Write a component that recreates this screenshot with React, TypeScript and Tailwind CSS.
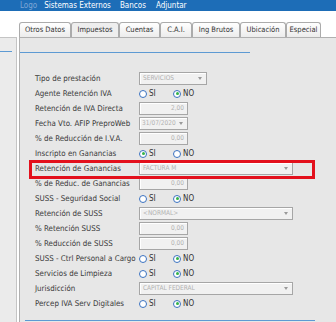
import React from "react";

type Row = {
  label: string;
  kind: "select" | "input" | "radio" | "date" | "long";
  value?: string;
  on?: "SI" | "NO";
};

const rows: Row[] = [
  { label: "Tipo de prestación", kind: "select", value: "SERVICIOS" },
  { label: "Agente Retención IVA", kind: "radio", on: "NO" },
  { label: "Retención de IVA Directa", kind: "input", value: "2,00" },
  { label: "Fecha Vto. AFIP PreproWeb", kind: "date", value: "31/07/2020" },
  { label: "% de Reducción de I.V.A.", kind: "input", value: "0,00" },
  { label: "Inscripto en Ganancias", kind: "radio", on: "SI" },
  { label: "Retención de Ganancias", kind: "long", value: "FACTURA M" },
  { label: "% de Reduc. de Ganancias", kind: "input", value: "0,00" },
  { label: "SUSS - Seguridad Social", kind: "radio", on: "NO" },
  { label: "Retención de SUSS", kind: "long", value: "<NORMAL>" },
  { label: "% Retención SUSS", kind: "input", value: "0,00" },
  { label: "% Reducción de SUSS", kind: "input", value: "0,00" },
  { label: "SUSS - Ctrl Personal a Cargo", kind: "radio", on: "NO" },
  { label: "Servicios de Limpieza", kind: "radio", on: "NO" },
  { label: "Jurisdicción", kind: "long", value: "CAPITAL FEDERAL" },
  { label: "Percep IVA Serv Digitales", kind: "radio", on: "NO" },
];

const tabs = [
  { name: "Otros Datos", w: "w-[52px]" },
  { name: "Impuestos", w: "w-[48px]", active: true },
  { name: "Cuentas", w: "w-[41px]" },
  { name: "C.A.I.", w: "w-[32px]" },
  { name: "Ing Brutos", w: "w-[48px]" },
  { name: "Ubicación", w: "w-[46px]" },
  { name: "Especial", w: "w-[35px]" },
];

const Arrow = () => (
  <span className="ml-auto mr-[4px] h-0 w-0 border-x-[2.5px] border-t-[3px] border-x-transparent border-t-[#9a9a9a]" />
);

const Radio = ({ label, checked }: { label: string; checked: boolean }) => (
  <div className="flex items-center gap-[2px]">
    <span className="flex h-[8px] w-[8px] items-center justify-center rounded-full border border-[#3b72c0] bg-white">
      {checked && <span className="h-[3px] w-[3px] rounded-full bg-[#35b34a]" />}
    </span>
    <span className="text-[8px] text-[#333]">{label}</span>
  </div>
);

const Control = ({ row }: { row: Row }) => {
  const box =
    "flex h-[13px] items-center border border-[#a6a6a6] bg-[#f1f1f1] text-[6.5px] text-[#b2b2b2] shadow-[inset_1px_1px_0_#fff]";
  if (row.kind === "radio") {
    return (
      <div className="flex items-center">
        <div className="w-[34px]">
          <Radio label="SI" checked={row.on === "SI"} />
        </div>
        <Radio label="NO" checked={row.on === "NO"} />
      </div>
    );
  }
  if (row.kind === "input") {
    return <div className={`${box} w-[49px] justify-end pr-[3px]`}>{row.value}</div>;
  }
  if (row.kind === "date") {
    return (
      <div className={`${box} w-[49px] pl-[2px]`}>
        <span>{row.value}</span>
        <Arrow />
      </div>
    );
  }
  if (row.kind === "select") {
    return (
      <div className={`${box} w-[68px] pl-[3px]`}>
        <span>{row.value}</span>
        <Arrow />
      </div>
    );
  }
  return (
    <div className={`${box} w-[154px] pl-[3px]`}>
      <span>{row.value}</span>
      <Arrow />
    </div>
  );
};

export default function App() {
  return (
    <div className="relative h-[322px] w-[336px] overflow-hidden bg-white font-['DejaVu_Sans_Condensed','Liberation_Sans',sans-serif]">
      {/* top menu */}
      <div className="flex h-[11px] items-center bg-[#1d6db7] text-[8px] leading-none">
        <span className="ml-[20px] text-[#7ea6d6]">Logo</span>
        <span className="ml-[7px] text-white">Sistemas Externos</span>
        <span className="ml-[9px] text-white">Bancos</span>
        <span className="ml-[10px] text-white">Adjuntar</span>
      </div>

      <div className="flex">
        {/* left panel */}
        <div className="mt-[26px] h-[300px] w-[17px] border-r border-t border-[#c4c4c4] bg-[#ebebeb]">
          <div className="mt-[13px] h-px w-[12px] bg-[#5d9ad3]" />
        </div>

        <div className="ml-[2px] flex-1">
          {/* tabs */}
          <div className="mt-[11px] flex h-[15px] items-end">
            {tabs.map((t) => (
              <div
                key={t.name}
                className={`${t.w} flex h-[15px] items-center justify-center rounded-t-[3px] border border-b-0 border-[#ababab] text-[7.5px] text-[#333] ${
                  t.active ? "bg-[#eeeeee]" : "bg-gradient-to-b from-white to-[#ececec]"
                }`}
              >
                {t.name}
              </div>
            ))}
          </div>

          {/* tab content */}
          <div className="relative h-[285px] border-l border-t border-[#b0b0b0] bg-[#e7e7e7]">
            <div className="mt-[14px] h-px w-[230px] bg-[#5d9ad3]" />
            <div className="mt-[18px] flex flex-col">
              {rows.map((r) => (
                <div key={r.label} className="flex h-[15px] items-center">
                  <span className="ml-[15px] w-[104px] whitespace-nowrap text-[7.9px] text-[#3a3a3a]">
                    {r.label}
                  </span>
                  <Control row={r} />
                </div>
              ))}
            </div>
            <div className="ml-[5px] mt-[9px] h-px w-[290px] bg-[#5d9ad3]" />

            {/* highlight annotation */}
            <div className="absolute left-[9px] top-[122px] h-[19px] w-[286px] border-[3px] border-[#e3101c]" />
          </div>
        </div>
      </div>
    </div>
  );
}
